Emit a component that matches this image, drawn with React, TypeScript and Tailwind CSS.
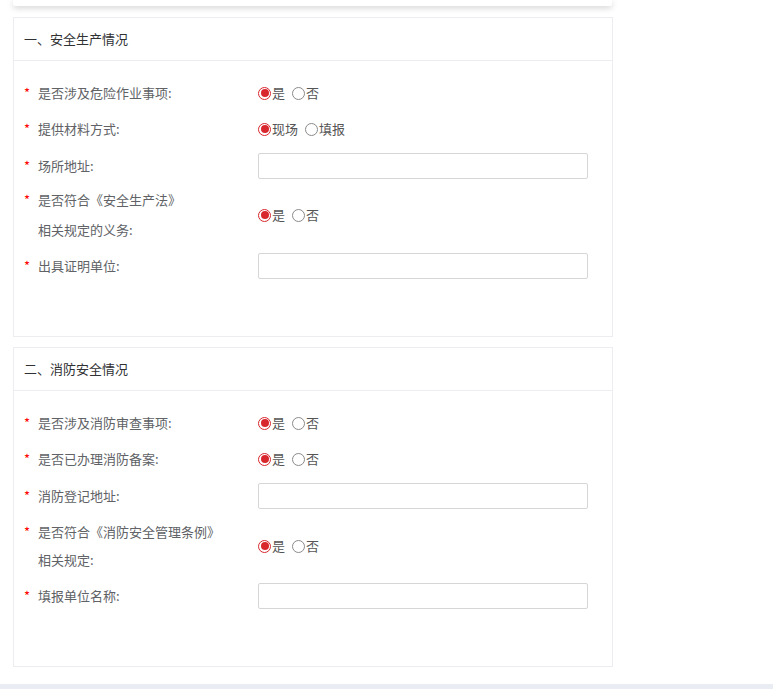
const font = { fontFamily: '"Noto Sans CJK SC", "Liberation Sans", sans-serif' };

type Field =
  | { kind: "radio"; label: string[]; options: string[]; value: number }
  | { kind: "input"; label: string[] };

const Radio = ({ checked, label }: { checked: boolean; label: string }) => (
  <label className="inline-flex items-center mr-[7px] cursor-pointer">
    <span
      className={
        checked
          ? "w-[13px] h-[13px] rounded-full border border-[#d9272e] flex items-center justify-center"
          : "w-[13px] h-[13px] rounded-full border border-[#8a8a8a]"
      }
    >
      {checked && <span className="w-[8px] h-[8px] rounded-full bg-[#d9272e]" />}
    </span>
    <span className="ml-[1px] text-[13px] text-[#555]">{label}</span>
  </label>
);

const Row = ({ field, lh }: { field: Field; lh: string }) => {
  const line = field.label.length > 1 ? lh : "leading-[26px]";
  return (
    <div className="flex items-center">
      <div className="w-[234px] flex shrink-0">
        <span className={`w-[14px] text-[13px] text-[#f00] ${line}`}>*</span>
        <div className={`text-[13px] text-[#606266] ${line}`}>
          {field.label.map((l) => (
            <div key={l}>{l}</div>
          ))}
        </div>
      </div>
      {field.kind === "radio" ? (
        <div className="flex items-center h-[26px]">
          {field.options.map((o, i) => (
            <Radio key={o} label={o} checked={i === field.value} />
          ))}
        </div>
      ) : (
        <input className="w-[330px] h-[26px] border border-[#d6d6d6] rounded-[2px] px-2 text-[13px] outline-none" />
      )}
    </div>
  );
};

const Section = ({ title, fields, lh, gaps }: { title: string; fields: Field[]; lh: string; gaps: string[] }) => (
  <div className="border border-[#ebedf0] bg-white shrink-0">
    <div className="h-[43px] flex items-center px-[10px] border-b border-[#ebedf0] text-[13px] text-[#303133]">{title}</div>
    <div className="pl-[10px] pt-[19px] pb-[57px]">
      {fields.map((f, i) => (
        <div key={i} className={gaps[i]}>
          <Row field={f} lh={lh} />
        </div>
      ))}
    </div>
  </div>
);

const part1: Field[] = [
  { kind: "radio", label: ["是否涉及危险作业事项:"], options: ["是", "否"], value: 0 },
  { kind: "radio", label: ["提供材料方式:"], options: ["现场", "填报"], value: 0 },
  { kind: "input", label: ["场所地址:"] },
  { kind: "radio", label: ["是否符合《安全生产法》", "相关规定的义务:"], options: ["是", "否"], value: 0 },
  { kind: "input", label: ["出具证明单位:"] },
];

const part2: Field[] = [
  { kind: "radio", label: ["是否涉及消防审查事项:"], options: ["是", "否"], value: 0 },
  { kind: "radio", label: ["是否已办理消防备案:"], options: ["是", "否"], value: 0 },
  { kind: "input", label: ["消防登记地址:"] },
  { kind: "radio", label: ["是否符合《消防安全管理条例》", "相关规定:"], options: ["是", "否"], value: 0 },
  { kind: "input", label: ["填报单位名称:"] },
];

export default function App() {
  return (
    <div className="h-[689px] w-[773px] bg-white flex flex-col overflow-hidden" style={font}>
      <div className="shrink-0 ml-[13px] w-[599px] h-[6px] bg-white shadow-[0_2px_6px_rgba(0,0,0,0.18)] rounded-b-[2px]" />
      <div className="shrink-0 ml-[13px] w-[600px] mt-[11px] flex flex-col gap-[10px]">
        <Section
          title="一、安全生产情况"
          fields={part1}
          lh="leading-[30px]"
          gaps={["", "mt-[10px]", "mt-[11px]", "mt-[6px]", "mt-[8px]"]}
        />
        <Section
          title="二、消防安全情况"
          fields={part2}
          lh="leading-[28px]"
          gaps={["", "mt-[10px]", "mt-[11px]", "mt-[9px]", "mt-[9px]"]}
        />
      </div>
      <div className="flex-1" />
      <div className="shrink-0 h-[5px] bg-[#e9edf3]" />
    </div>
  );
}
